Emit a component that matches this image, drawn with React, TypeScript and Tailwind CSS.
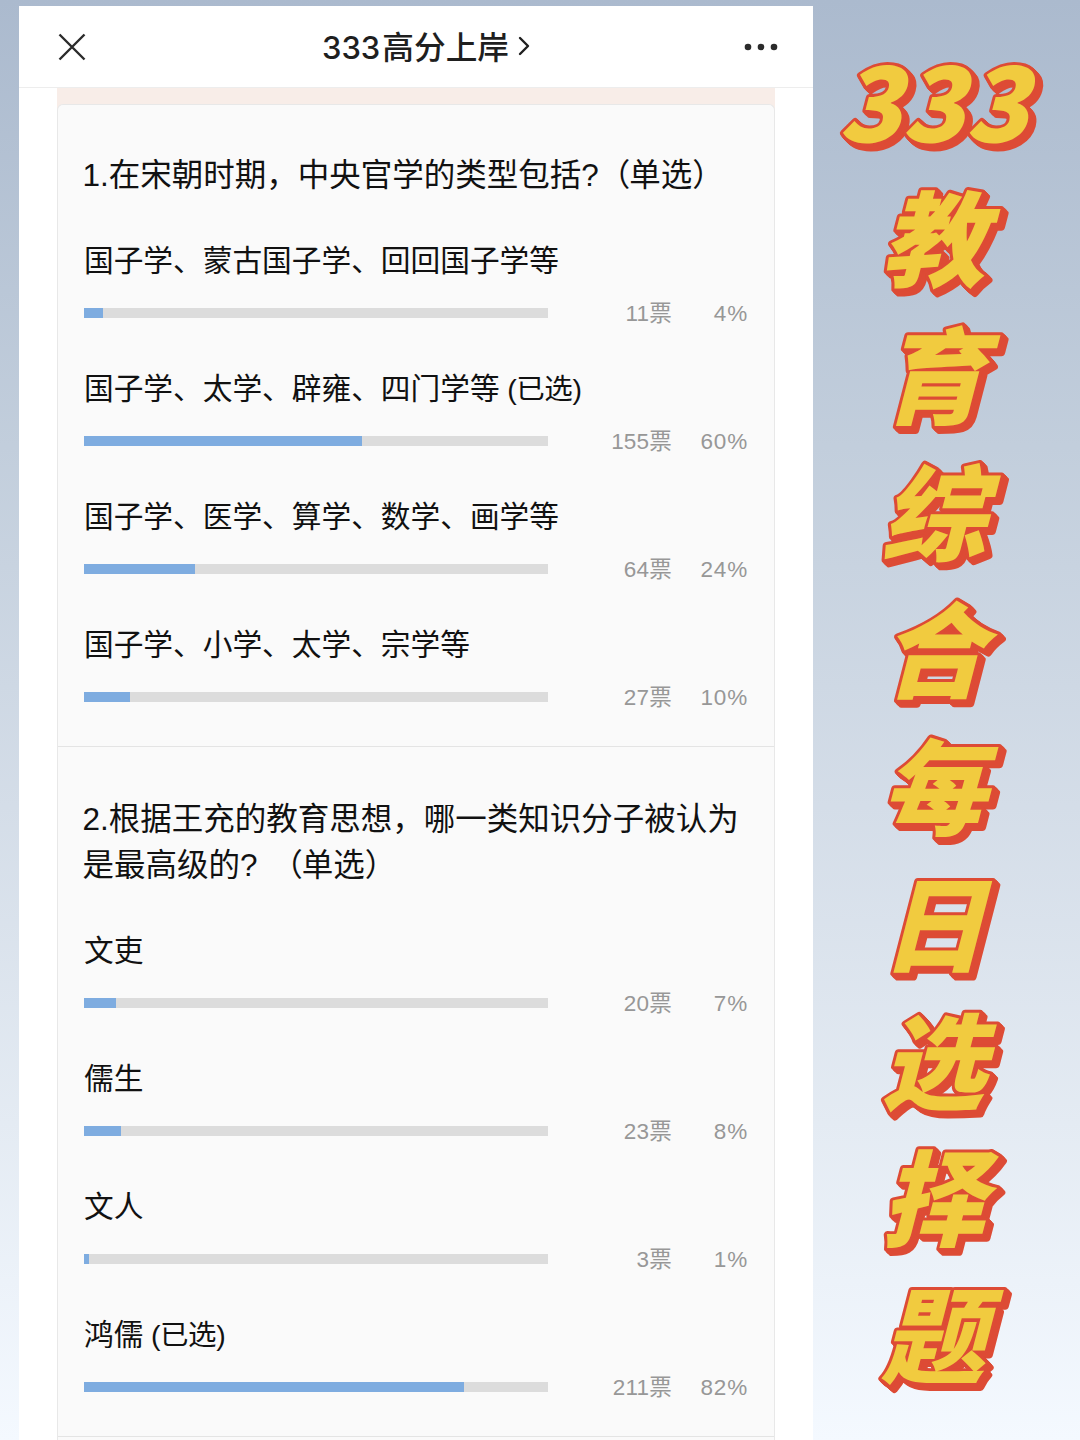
import { ChevronRight } from "lucide-react";

type Option = { label: string; votes: number; percent: number; picked?: boolean };
type Question = { title: string; options: Option[] };

const QUESTIONS: Question[] = [
  {
    title: "1.在宋朝时期，中央官学的类型包括?",
    options: [
      { label: "国子学、蒙古国子学、回回国子学等", votes: 11, percent: 4 },
      { label: "国子学、太学、辟雍、四门学等", votes: 155, percent: 60, picked: true },
      { label: "国子学、医学、算学、数学、画学等", votes: 64, percent: 24 },
      { label: "国子学、小学、太学、宗学等", votes: 27, percent: 10 },
    ],
  },
  {
    title: "2.根据王充的教育思想，哪一类知识分子被认为是最高级的? ",
    options: [
      { label: "文吏", votes: 20, percent: 7 },
      { label: "儒生", votes: 23, percent: 8 },
      { label: "文人", votes: 3, percent: 1 },
      { label: "鸿儒", votes: 211, percent: 82, picked: true },
    ],
  },
];

const BANNER = ["333", "教", "育", "综", "合", "每", "日", "选", "择", "题"];

function Header() {
  return (
    <header className="flex h-[82px] shrink-0 items-center justify-between border-b border-[#ededed] pl-[39px] pr-[35px]">
      <svg width="28" height="28" viewBox="0 0 28 28" stroke="#2b2b2b" strokeWidth="2.4" fill="none">
        <path d="M1.5 1.5 26.5 26.5M26.5 1.5 1.5 26.5" />
      </svg>
      <div className="flex items-center pl-[32px] text-[31.7px] font-medium text-[#1f1f1f]">
        <span className="pt-[3px] font-['Inter'] text-[31px]">333</span>
        <span className="ml-[2px] pt-[5px]">高分上岸</span>
        <ChevronRight className="-ml-[1px]" size={32} strokeWidth={1.8} />
      </div>
      <svg width="34" height="8" viewBox="0 0 34 8" fill="#2b2b2b">
        <circle cx="4" cy="4" r="3.3" />
        <circle cx="17" cy="4" r="3.3" />
        <circle cx="30" cy="4" r="3.3" />
      </svg>
    </header>
  );
}

function OptionRow({ option }: { option: Option }) {
  return (
    <div>
      <div className="h-[50px] whitespace-nowrap text-[29.7px] leading-[50px] text-[#111]">
        {option.label}
        {option.picked && <span className="text-[28.5px] tracking-[-0.4px]"> (已选)</span>}
      </div>
      <div className="flex h-[54px] items-center text-[22.5px] tracking-[0.2px] text-[#979797]">
        <div className="h-[10px] w-[464px] bg-[#dcdcdc]">
          <div className="h-full bg-[#7eace0]" style={{ width: `${option.percent}%` }} />
        </div>
        <span className="w-[124px] pt-[2px] text-right">{option.votes}票</span>
        <span className="w-[76px] pt-[2px] text-right tracking-[0.8px]">{option.percent}%</span>
      </div>
    </div>
  );
}

function QuestionBlock({ question }: { question: Question }) {
  return (
    <section className="border-b border-[#e4e4e4] pb-[22px] pl-[26px] pt-[47px] last:pt-[49px]">
      <h2 className="-ml-[1.5px] mb-[38px] w-[662px] whitespace-pre-wrap text-[31.5px] leading-[46px] text-[#111] [word-spacing:5px]">
        {question.title}
        <span className="tracking-[-1px]">（</span>单选）
      </h2>
      <div className="flex flex-col gap-6">
        {question.options.map((o) => (
          <OptionRow key={o.label} option={o} />
        ))}
      </div>
    </section>
  );
}

// slanted yellow lettering, one glyph per row, with a red extrusion to the lower right
function Banner() {
  return (
    <aside className="flex flex-1 flex-col pt-[22px] font-['Noto_Sans_CJK_SC',sans-serif]">
      {BANNER.map((c) => (
        <svg
          key={c}
          className="h-[137px] w-[267px] shrink-0 overflow-visible [filter:drop-shadow(1px_1px_0_#dd4b35)_drop-shadow(2px_2px_0_#dd4b35)_drop-shadow(2px_2px_0_#dd4b35)]"
          viewBox="0 0 267 137"
        >
          <text
            transform="translate(120 114) skewX(-14.5)"
            textAnchor="middle"
            strokeWidth="6"
            strokeLinejoin="round"
            className="fill-[#f1cb3f] stroke-[#dd4b35] text-[104px] font-black [paint-order:stroke_fill]"
          >
            {c}
          </text>
        </svg>
      ))}
    </aside>
  );
}

export default function App() {
  return (
    <div className="flex h-[1440px] w-[1080px] overflow-hidden bg-[linear-gradient(#abbace,#c2cedc_31%,#d4dde8_56%,#e4ebf3_78%,#f4f9ff)] pl-[19px] pt-[6px] font-['Liberation_Sans','Noto_Sans_CJK_SC',sans-serif]">
      <main className="flex w-[794px] shrink-0 flex-col bg-white">
        <Header />
        <div className="mx-[38px] flex-1 bg-[#f8ede8] pt-[16px]">
          <div className="h-full rounded-t-md border border-b-0 border-[#e8e8e8] bg-[#fafafa]">
            {QUESTIONS.map((q) => (
              <QuestionBlock key={q.title} question={q} />
            ))}
          </div>
        </div>
      </main>
      <Banner />
    </div>
  );
}
